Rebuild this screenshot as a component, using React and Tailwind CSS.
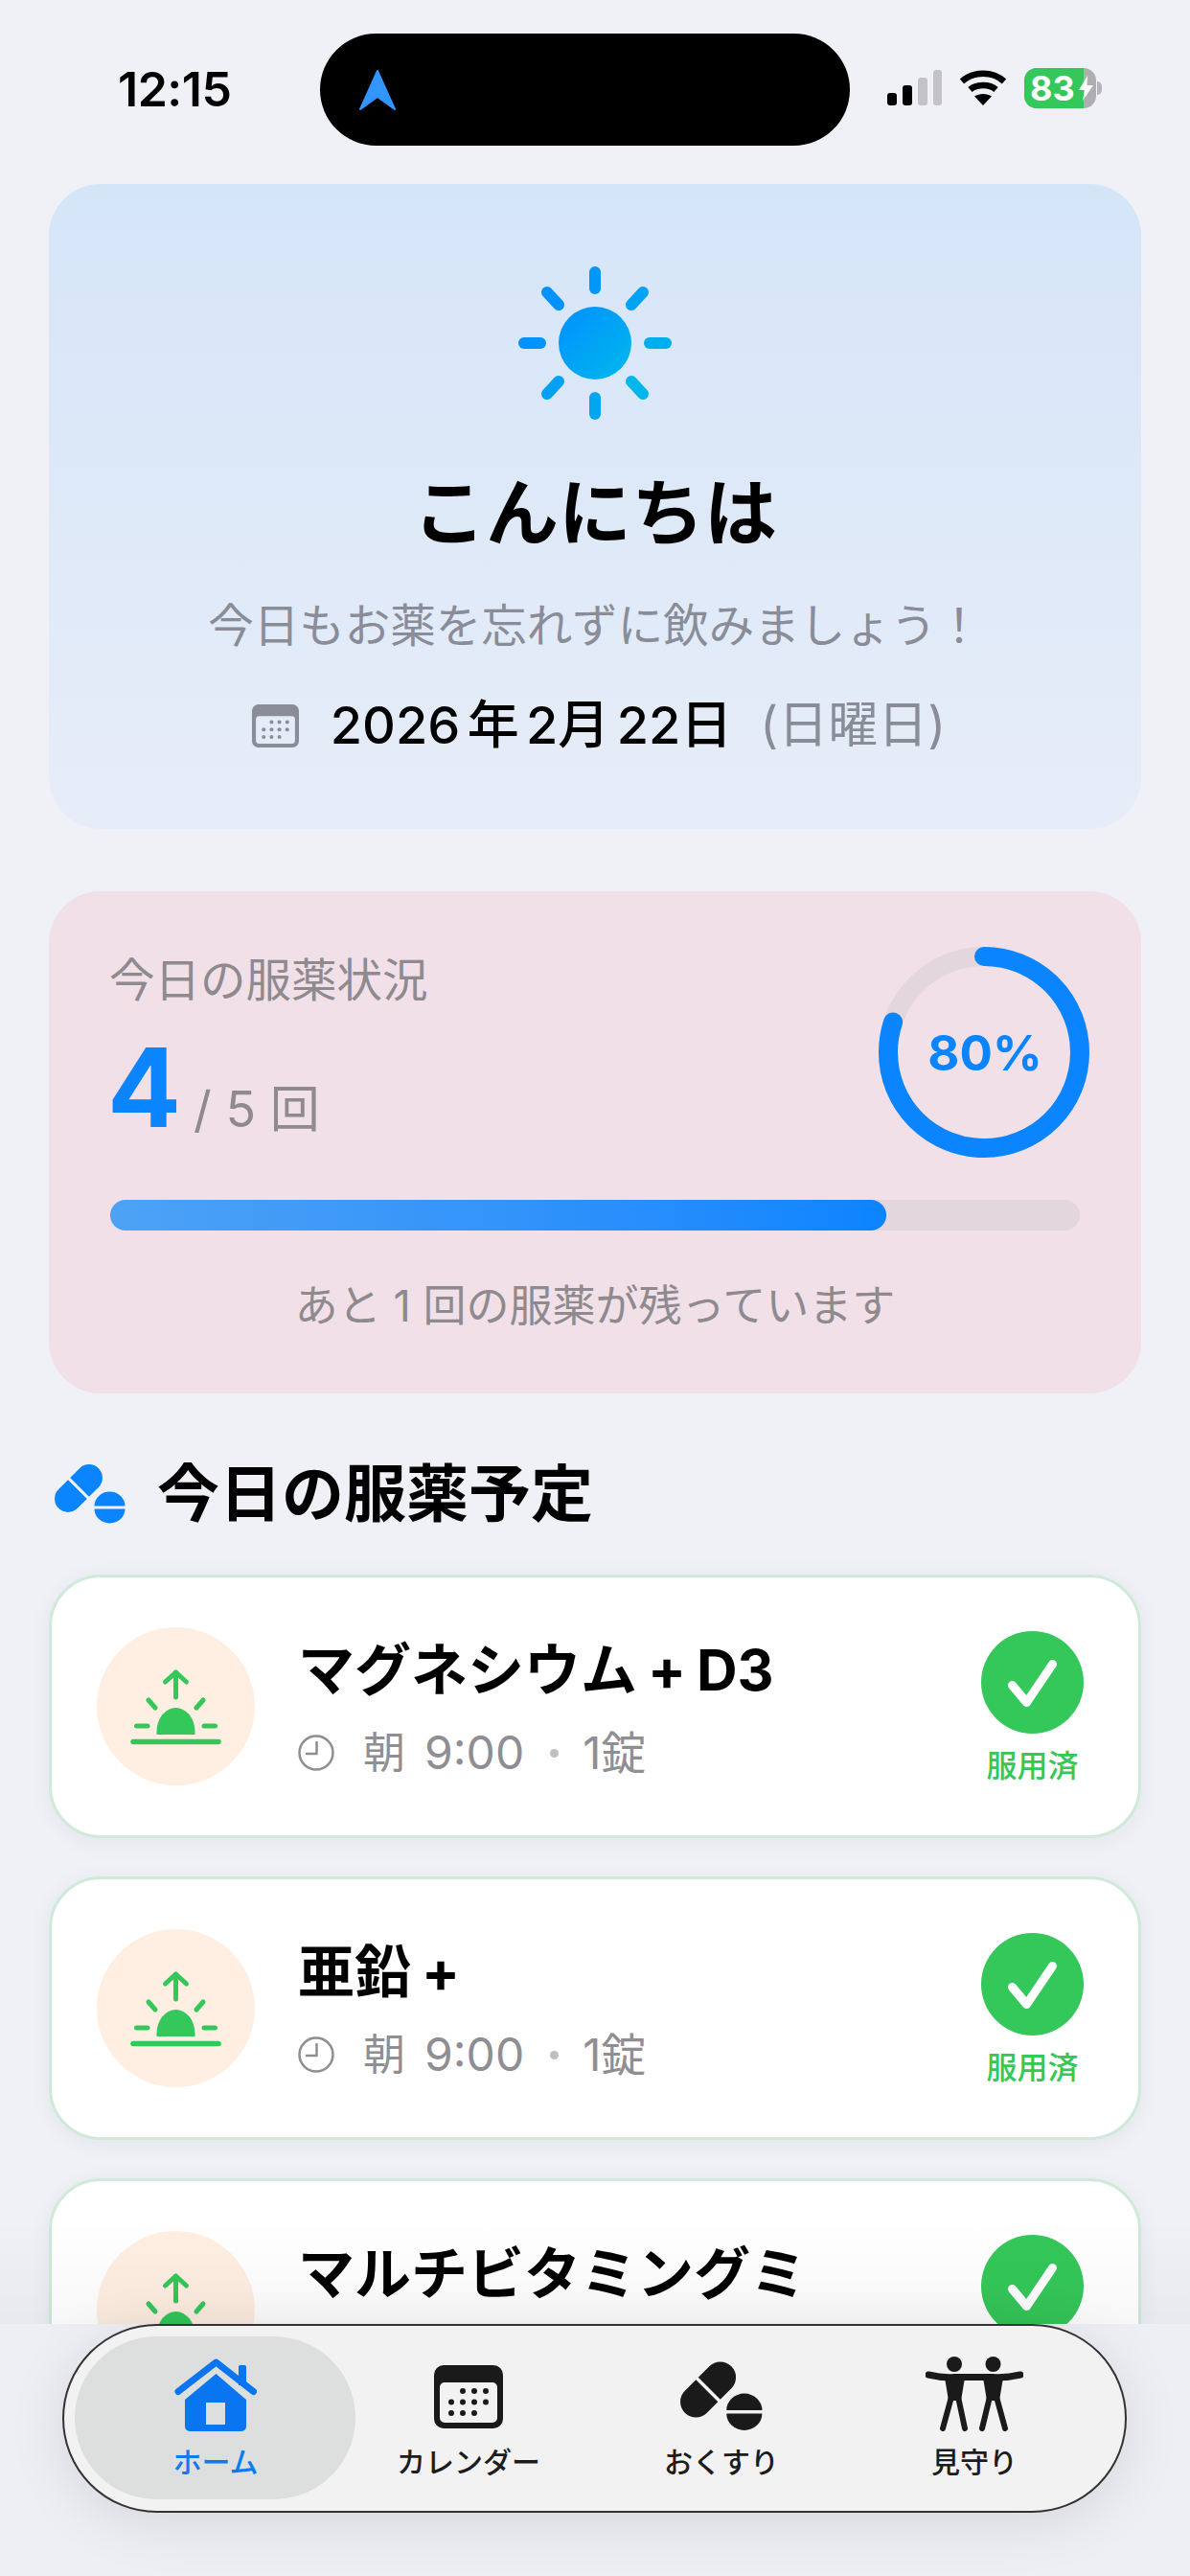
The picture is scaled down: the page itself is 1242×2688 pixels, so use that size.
import React from "react";

function Sun() {
  return (
    <svg width="160" height="160" viewBox="-80 -80 160 160">
      <defs>
        <linearGradient id="sunFill" x1="0" y1="0" x2="1" y2="1">
          <stop offset="0" stopColor="#0090ff" />
          <stop offset="1" stopColor="#00b8ec" />
        </linearGradient>
      </defs>
      <circle cx="0" cy="0" r="38" fill="url(#sunFill)" />
      <g strokeWidth="12" strokeLinecap="round">
        <path d="M0 -74V-57" stroke="#0097fb" />
        <path d="M0 57V74" stroke="#00a6f2" />
        <path d="M-74 0H-57" stroke="#0092ff" />
        <path d="M57 0H74" stroke="#00aef0" />
        <path d="M-50 -53L-38 -40" stroke="#0092ff" />
        <path d="M50 -53L38 -40" stroke="#00a2f5" />
        <path d="M-50 53L-38 40" stroke="#00a0f5" />
        <path d="M50 53L38 40" stroke="#00b6ec" />
      </g>
    </svg>
  );
}

function CalendarIcon({ className }) {
  return (
    <svg className={className} viewBox="0 0 72 66" fill="currentColor">
      <path
        fillRule="evenodd"
        d="M10 0H62a10 10 0 0 1 10 10V56a10 10 0 0 1-10 10H10A10 10 0 0 1 0 56V10A10 10 0 0 1 10 0ZM11 18a5 5 0 0 0-5 5V55a5 5 0 0 0 5 5H61a5 5 0 0 0 5-5V23a5 5 0 0 0-5-5Z"
      />
      <circle cx="30" cy="27" r="3" />
      <circle cx="42" cy="27" r="3" />
      <circle cx="54" cy="27" r="3" />
      <circle cx="18" cy="38.5" r="3" />
      <circle cx="30" cy="38.5" r="3" />
      <circle cx="42" cy="38.5" r="3" />
      <circle cx="54" cy="38.5" r="3" />
      <circle cx="18" cy="50" r="3" />
      <circle cx="30" cy="50" r="3" />
      <circle cx="42" cy="50" r="3" />
    </svg>
  );
}

function PillsIcon({ className }) {
  return (
    <svg className={className} viewBox="0 0 74 62" fill="currentColor">
      <g transform="translate(25 25) rotate(-45)">
        <path d="M-1.5 -14H-15.5a14 14 0 0 0 0 28H-1.5Z" />
        <path d="M1.5 -14H15.5a14 14 0 0 1 0 28H1.5Z" />
      </g>
      <path d="M41.5 43.5a16 15 0 0 1 32 0Z" />
      <path d="M41.5 46.5a16 15 0 0 0 32 0Z" />
    </svg>
  );
}

function HomeIcon({ className }) {
  return (
    <svg className={className} viewBox="0 0 86 76" fill="currentColor">
      <path
        fillRule="evenodd"
        d="M43.5 16L75 43V71a5 5 0 0 1-5 5H16a5 5 0 0 1-5-5V43ZM33 46V69H53V46Z"
      />
      <path d="M67 8.5a1.5 1.5 0 0 1 1.5-1.5H73.500a1.500 1.500 0 0 1 1.500 1.500V28H67Z" />
      <path d="M4 34.500L43.500 4L82.500 34.500" fill="none" stroke="currentColor" strokeWidth="7" strokeLinecap="round" strokeLinejoin="round" />
    </svg>
  );
}

function PeopleIcon({ className }) {
  return (
    <svg className={className} viewBox="0 0 102 78" fill="currentColor">
      <circle cx="30" cy="8" r="8" />
      <circle cx="70.500" cy="8" r="8" />
      <path d="M3 19Q18 22.500 30 21.500H70Q84 22.500 99 19" fill="none" stroke="currentColor" strokeWidth="7" strokeLinecap="round" />
      <path d="M20 22H41L37 46H24Z" />
      <path d="M60 22H81L77 46H64Z" />
      <g fill="none" stroke="currentColor" strokeWidth="6" strokeLinecap="round">
        <path d="M27 42L18 75" />
        <path d="M34 42L41 75" />
        <path d="M67 42L59 75" />
        <path d="M74 42L83 75" />
      </g>
    </svg>
  );
}

function Sunrise() {
  return (
    <svg width="100" height="84" viewBox="0 0 100 84" className="text-[#34c759]" fill="currentColor">
      <g fill="none" stroke="currentColor" strokeWidth="5" strokeLinecap="round" strokeLinejoin="round">
        <path d="M49.500 32V6" />
        <path d="M38.500 16L49.500 6L60.500 16" />
        <path d="M21 35L28 43" />
        <path d="M78 35L71 43" />
        <path d="M8.500 62H20" />
        <path d="M79 62H90.500" />
        <path d="M5 78.500H94" strokeWidth="5.500" />
      </g>
      <path d="M29.500 68a20 25 0 0 1 40 0v3H29.500Z" />
    </svg>
  );
}

function ClockIcon() {
  return (
    <svg width="38" height="38" viewBox="0 0 38 38" fill="none" stroke="#8e8e93" strokeWidth="2.500" strokeLinecap="round" strokeLinejoin="round">
      <circle cx="19" cy="19" r="17.500" />
      <path d="M19.500 8V20H9" />
    </svg>
  );
}

function MedCard({ name }) {
  return (
    <div className="flex h-[275px] shrink-0 items-center rounded-[54px] border-[3px] border-[#cfead8] bg-white pl-[47px] pr-[57px] shadow-[0_4px_24px_rgba(0,0,0,0.05)]">
      <div className="flex h-[165px] w-[165px] shrink-0 items-center justify-center rounded-full bg-[#ffeee2]">
        <Sunrise />
      </div>
      <div className="ml-[45px] flex flex-1 flex-col">
        <div className="text-[59px] font-bold leading-[72px] text-black [word-spacing:-3px]">{name}</div>
        <div className="mt-[25px] flex items-center text-[44px] leading-[50px] text-[#8e8e93]">
          <ClockIcon />
          <span className="ml-[30px]">朝</span>
          <span className="ml-[20px] text-[48px]">9:00</span>
          <span className="ml-[27px] h-[9px] w-[9px] rounded-full bg-[#c0c0c4]" />
          <span className="ml-[25px] text-[47px]">1錠</span>
        </div>
      </div>
      <div className="flex w-[107px] flex-col items-center">
        <div className="flex h-[107px] w-[107px] items-center justify-center rounded-full bg-[#34c759]">
          <svg width="107" height="107" viewBox="-53.500 -53.500 107 107" fill="none" stroke="white" strokeWidth="9" strokeLinecap="round" strokeLinejoin="round">
            <path d="M-21 3L-6 21L21 -19" />
          </svg>
        </div>
        <div className="mt-[18px] whitespace-nowrap text-[32px] font-medium leading-[32px] text-[#34c759]">服用済</div>
      </div>
    </div>
  );
}

function TabItem({ label, active, children }) {
  return (
    <div className="relative flex flex-col items-center">
      {active && <div className="absolute -left-[15px] -right-[14px] top-0 h-[170px] rounded-full bg-[#dddfdf]" />}
      <div className="relative flex h-[99px] items-end pt-[23px]">{children}</div>
      <div className={`relative mt-[12px] text-[30px] font-medium leading-[40px] ${active ? "text-[#0a7cf0]" : "text-[#1c1c1c]"}`}>
        {label}
      </div>
    </div>
  );
}

export default function App() {
  return (
    <div className="relative h-[2688px] w-[1242px] overflow-hidden bg-[#f0f1f6] font-['Inter','Noto_Sans_CJK_JP',sans-serif]">
      {/* status bar */}
      <div className="flex h-[192px] items-start pl-[123px] pt-[35px]">
        <div className="mt-[31px] w-[122px] whitespace-nowrap text-[50px] font-semibold leading-[54px] tracking-[-0.5px] text-black">12:15</div>
        <div className="ml-[89px] flex h-[117px] w-[553px] items-center rounded-full bg-black pl-[40px]">
          <svg width="40" height="44" viewBox="0 0 40 44" fill="#3395ff" stroke="#3395ff" strokeWidth="2" strokeLinejoin="round">
            <path d="M20 2L38 42L20 29L2 42Z" />
          </svg>
        </div>
        <svg className="ml-[39px] mt-[38px]" width="57" height="37" viewBox="0 0 57 37">
          <rect x="0" y="24" width="10" height="13" rx="3" fill="#000" />
          <rect x="16" y="16" width="10" height="21" rx="3" fill="#000" />
          <rect x="32" y="8" width="10" height="29" rx="3" fill="#c2c2c7" />
          <rect x="48" y="0" width="9" height="37" rx="3" fill="#c2c2c7" />
        </svg>
        <svg className="ml-[18px] mt-[38px]" width="50" height="37" viewBox="0 0 50 37" fill="none" stroke="#000" strokeWidth="6.500">
          <path d="M3 12C15 1 35 1 47 12" />
          <path d="M11.500 20.500C18 14.500 32 14.500 38.500 20.500" />
          <path d="M25 37L16 27.500C21 24 29 24 34 27.500Z" fill="#000" stroke="none" />
        </svg>
        <div className="relative ml-[18px] mt-[36px] flex h-[42px] w-[75px] items-center overflow-hidden rounded-[13px] bg-[#aeaeb2]">
          <div className="absolute inset-y-0 left-0 w-[62px] bg-[#34c759]" />
          <span className="relative ml-[6px] text-[36px] font-bold leading-[42px] text-white">83</span>
          <svg className="absolute right-[3px] top-[8px]" width="15" height="26" viewBox="0 0 15 26" fill="white">
            <path d="M9 0L0 15H6L4 26L15 10H8.500Z" />
          </svg>
        </div>
        <div className="ml-[1px] mt-[50px] h-[14px] w-[5px] rounded-r-full bg-[#b5b5b9]" />
      </div>

      <div className="flex flex-col px-[51px]">
        {/* greeting */}
        <div className="flex h-[673px] flex-col items-center rounded-[54px] bg-gradient-to-b from-[#d5e5f8] to-[#e7edf8] pt-[86px]">
          <Sun />
          <div className="mt-[52px] text-[76px] font-bold leading-[90px] text-black">こんにちは</div>
          <div className="mt-[43px] text-[47.5px] leading-[60px] text-[#8a8d98]">今日もお薬を忘れずに飲みましょう！</div>
          <div className="mt-[42px] flex items-center pl-[8px] text-[54px] leading-[64px] text-black">
            <CalendarIcon className="h-[45px] w-[49px] text-[#8a8d98]" />
            <span className="ml-[33px] font-medium [word-spacing:-7px]">2026 年 2月 22日</span>
            <span className="ml-[29px] text-[52px] text-[#8a8d98]">(日曜日)</span>
          </div>
        </div>

        {/* progress */}
        <div className="mt-[65px] flex h-[524px] flex-col rounded-[54px] bg-[#f1e0e8] px-[64px] pt-[58px]">
          <div className="flex justify-between">
            <div className="pt-[5px]">
              <div className="-ml-[1px] text-[47.5px] leading-[60px] text-[#8e8a8e]">今日の服薬状況</div>
              <div className="mt-[27px] flex items-baseline">
                <span className="-ml-[3px] text-[114px] font-bold leading-[110px] text-[#0a84ff]">4</span>
                <span className="ml-[13px] text-[52px] leading-[60px] text-[#8e8a8e]">/ 5 回</span>
              </div>
            </div>
            <div className="relative -mr-[10px] h-[220px] w-[220px]">
              <svg width="220" height="220" viewBox="0 0 220 220" fill="none" strokeWidth="20">
                <circle cx="110" cy="110" r="100" stroke="#e3d6dc" />
                <circle
                  cx="110"
                  cy="110"
                  r="100"
                  stroke="#0a84ff"
                  strokeLinecap="round"
                  strokeDasharray="502.650 628.320"
                  transform="rotate(-90 110 110)"
                />
              </svg>
              <div className="absolute inset-0 flex items-center justify-center pl-[2px] pt-[2px] text-[51px] font-bold text-[#0a84ff]">80%</div>
            </div>
          </div>
          <div className="mt-[44px] h-[32px] rounded-full bg-[#e3d6dc]">
            <div className="h-full w-[80%] rounded-full bg-gradient-to-r from-[#4da2f5] to-[#0a84ff]" />
          </div>
          <div className="mt-[49px] text-center text-[45px] leading-[60px] text-[#8e8a8e]">あと 1 回の服薬が残っています</div>
        </div>

        {/* schedule */}
        <div className="mt-[65px] flex h-[80px] items-center pl-[6px]">
          <PillsIcon className="h-[62px] w-[74px] text-[#0a84ff]" />
          <div className="ml-[33px] text-[65px] font-bold leading-[80px] text-black">今日の服薬予定</div>
        </div>
        <div className="mt-[44px] flex flex-col gap-[40px]">
          <MedCard name="マグネシウム + D3" />
          <MedCard name="亜鉛 +" />
          <MedCard name="マルチビタミングミ" />
        </div>
      </div>

      {/* tab bar */}
      <div className="absolute inset-x-0 bottom-[263px] h-[110px] bg-gradient-to-b from-transparent to-[rgba(0,0,0,0.03)]" />
      <div className="absolute inset-x-0 bottom-0 h-[263px] bg-[#eeeff4]">
        <div className="ml-[65px] h-[197px] w-[1111px] rounded-full border-2 border-[#333] bg-[#f2f2f3] shadow-[0_10px_60px_rgba(0,0,0,0.1)]">
          <div className="ml-[26px] grid w-[1056px] grid-cols-4 pt-[11px]">
            <TabItem label="ホーム" active>
              <HomeIcon className="h-[76px] w-[86px] text-[#0a75f0]" />
            </TabItem>
            <TabItem label="カレンダー">
              <CalendarIcon className="mb-[3px] h-[66px] w-[72px] text-[#1a1a1a]" />
            </TabItem>
            <TabItem label="おくすり">
              <PillsIcon className="h-[73px] w-[86px] text-[#1a1a1a]" />
            </TabItem>
            <TabItem label="見守り">
              <PeopleIcon className="h-[78px] w-[102px] text-[#1a1a1a]" />
            </TabItem>
          </div>
        </div>
      </div>
    </div>
  );
}
